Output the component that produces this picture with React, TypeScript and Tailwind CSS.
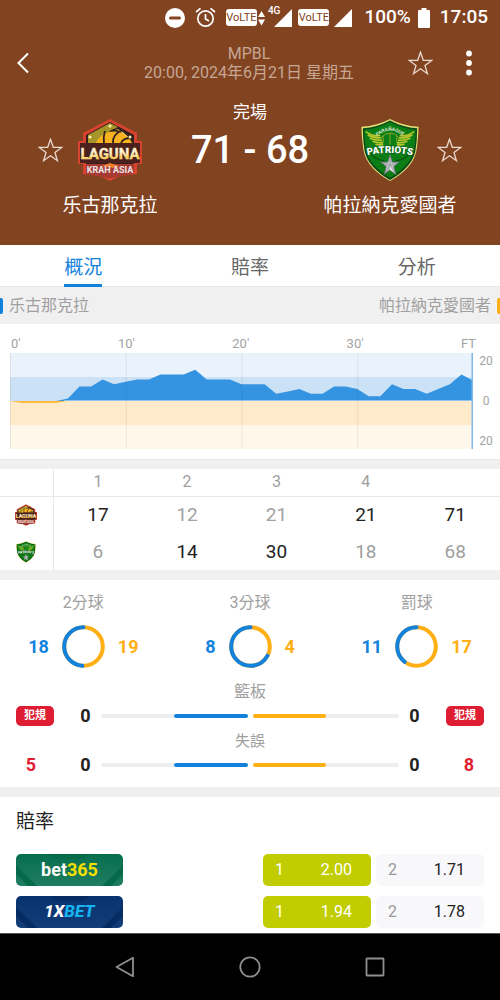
import { useState } from "react";
import clsx from "clsx";

type Side = "home" | "away";

const TEAMS: Record<Side, { name: string; total: number }> = {
  home: { name: "乐古那克拉", total: 71 },
  away: { name: "帕拉納克愛國者", total: 68 },
};

const TABS = ["概況", "賠率", "分析"];

const LEADS = [
  0, -0.8, -0.8, -0.8, -0.8, 1, 6, 6, 9, 7, 8, 9, 9, 11, 11, 11, 13, 9, 9, 9, 7,
  7, 7, 3, 4, 5, 3, 3, 6, 6, 5, 2, 2, 7, 5, 5, 3, 5, 7, 11, 8.5,
];

const QUARTERS: Record<Side, number[]> = {
  home: [17, 12, 21, 21],
  away: [6, 14, 30, 18],
};

const SHOTS = [
  { label: "2分球", home: 18, away: 19 },
  { label: "3分球", home: 8, away: 4 },
  { label: "罰球", home: 11, away: 17 },
];

const ODDS = [
  { book: "bet365", home: "2.00", away: "1.71" },
  { book: "1XBET", home: "1.94", away: "1.78" },
];

function StarIcon() {
  return (
    <svg width="25" height="25" viewBox="0 0 25 25" fill="none" aria-hidden="true">
      <path
        d="M12.5 1.2 15.3 9.3 23.7 9.4 17 14.5 19.4 22.7 12.5 17.8 5.6 22.7 8 14.5 1.3 9.4 9.7 9.3Z"
        stroke="#ead9cf"
        strokeWidth="1.3"
      />
    </svg>
  );
}

function LagunaLogo({ size }: { size: number }) {
  return (
    <svg width={size} height={size} viewBox="0 0 64 64" role="img" aria-label={TEAMS.home.name}>
      <path d="M32 1 59 15V23H64V46H59V56L42 58 32 63 22 58 5 56V46H0V23H5V15Z" fill="#d8432f" />
      <path d="M32 4 56 17V54L32 60 8 54V17Z" fill="#33201c" />
      <path d="M32 5 10 17V26H24Q27 13 40 9Z" fill="#a8952a" />
      <path d="M18 25A19 17 0 0 1 54 25Z" fill="#f6b21f" />
      <path d="M35 10Q46 12 52 22Q42 12 35 10Z" fill="#ffd85a" />
      <path
        d="M27 13Q25 19 26 25M35 25Q34 17 44 12M43 25Q45 20 53 20"
        fill="none"
        stroke="#33201c"
        strokeWidth="1.8"
      />
      <g fill="#fff0b0">
        <circle cx="32" cy="8" r="1.5" />
        <circle cx="12" cy="19" r="1.5" />
        <circle cx="52" cy="19" r="1.5" />
      </g>
      <path d="M2 25H62V45H2Z" fill="#4a211c" />
      <path d="M8 46H56V56L32 60 8 56Z" fill="#a73a32" />
      <path d="M24 48 32 45 41 48 36 50Z" fill="#f08030" />
      <defs>
        <linearGradient id="laguna-gold" x1="0" y1="0" x2="0" y2="1">
          <stop offset="0.4" stopColor="#fff6e0" />
          <stop offset="0.75" stopColor="#ffc02c" />
        </linearGradient>
      </defs>
      <text
        x="32"
        y="41"
        textAnchor="middle"
        fontFamily="Roboto, sans-serif"
        fontWeight="700"
        fontSize="15"
        fill="url(#laguna-gold)"
        stroke="#ffe9b0"
        strokeWidth="0.4"
      >
        LAGUNA
      </text>
      <text
        x="32"
        y="55"
        textAnchor="middle"
        fontFamily="Roboto, sans-serif"
        fontWeight="700"
        fontSize="9"
        fill="#e9e4e6"
      >
        KRAH ASIA
      </text>
    </svg>
  );
}

function PatriotsLogo({ size }: { size: number }) {
  return (
    <svg width={size} height={size} viewBox="0 0 64 66" role="img" aria-label={TEAMS.away.name}>
      <path
        d="M32 1Q45 8 61.5 9Q61 24 59 35Q55 52 32 65Q9 52 5 35Q3 24 2.5 9Q19 8 32 1Z"
        fill="#e3df74"
      />
      <path
        d="M32 2.5Q45 9.5 60 10.5Q60 24 58 35Q54 51 32 64Q10 51 6 35Q4 24 4 10.5Q19 9.5 32 2.5Z"
        fill="#0b4a1a"
      />
      <path
        d="M32 4Q45 11 58.5 12Q58.5 24 56.5 34Q53 49 32 61.5Q11 49 7.5 34Q5.5 24 5.5 12Q19 11 32 4Z"
        fill="#0b7f16"
      />
      <g fill="none" stroke="#b9c52c" strokeWidth="1.7">
        <path d="M7 14Q14 19 22 18M9 17.5Q15 21 23 20.5M11 21Q17 23.5 24 23M14 24Q19 26 25 25.5M17 27Q21 28 25 27.5" />
        <path d="M57 14Q50 19 42 18M55 17.5Q49 21 41 20.5M53 21Q47 23.5 40 23M50 24Q45 26 39 25.5M47 27Q43 28 39 27.5" />
      </g>
      <path
        d="M23 20Q32 11 41 20M25 18V25M32 16V27M39 18V25"
        fill="none"
        stroke="#8fa52c"
        strokeWidth="1"
      />
      <path id="patriots-arc" d="M19 19Q32 7 46 19" fill="none" />
      <text fontFamily="Roboto, sans-serif" fontWeight="700" fontSize="5" fill="#dfe6cf">
        <textPath href="#patriots-arc">PARAÑAQUE</textPath>
      </text>
      <path d="M9 34Q18 44 26 44M55 34Q46 44 38 44" fill="none" stroke="#07590f" strokeWidth="1.5" />
      <path id="patriots-name" d="M7 39Q32 33 57 39" fill="none" />
      <text
        fontFamily="Roboto, sans-serif"
        fontWeight="900"
        fontSize="10"
        fill="#fff"
        stroke="#0b5a16"
        strokeWidth="1"
        paintOrder="stroke"
      >
        <textPath href="#patriots-name" startOffset="50%" textAnchor="middle">
          PATRIOTS
        </textPath>
      </text>
      <path
        d="M32 38 34.5 45.5H41.5L36 50 38 58 32 53.5 26 58 28 50 22.5 45.5H29.5Z"
        fill="#b9bdc0"
        stroke="#56665a"
        strokeWidth="0.8"
      />
      <path
        d="M32 38V49L38 58 32 53.5M32 49 41.5 45.5M32 49 22.5 45.5M32 49 26 58"
        fill="#e4e6e8"
        stroke="#878d90"
        strokeWidth="0.5"
      />
    </svg>
  );
}

function VolteBadge() {
  return (
    <span className="flex h-[17px] w-[31px] items-center justify-center rounded-[3px] bg-white text-[11px] leading-none font-normal text-[#824321]">
      VoLTE
    </span>
  );
}

function SignalIcon() {
  return (
    <svg width="18" height="18" viewBox="0 0 18 18" aria-hidden="true">
      <path d="M0 18 18 0V18Z" fill="#fff" />
    </svg>
  );
}

function StatusBar() {
  return (
    <div className="flex h-[35px] items-center justify-end pr-3 text-[19px] font-medium">
      <svg width="20" height="20" viewBox="0 0 20 20" aria-hidden="true">
        <circle cx="10" cy="10" r="10" fill="#fff" />
        <path d="M5.5 10H14.5" stroke="#824321" strokeWidth="3" strokeLinecap="round" />
      </svg>
      <svg
        className="ml-[10px]"
        width="21"
        height="21"
        viewBox="0 0 21 21"
        fill="none"
        stroke="#fff"
        strokeWidth="1.7"
        aria-hidden="true"
      >
        <circle cx="10.5" cy="11.5" r="7.7" />
        <path d="M1 5 5.5 1.3M20 5 15.5 1.3M10.5 7V12L14 14" />
      </svg>
      <span className="ml-[10px]">
        <VolteBadge />
      </span>
      <svg className="ml-px" width="7" height="16" viewBox="0 0 7 16" fill="#fff" aria-hidden="true">
        <path d="M0 7 3.5 1 7 7ZM0 9.5H7L3.5 15.5Z" />
      </svg>
      <span className="-mr-[6px] ml-[3px] self-start pt-[6px] text-[10px] leading-[10px]">4G</span>
      <SignalIcon />
      <span className="ml-[6px]">
        <VolteBadge />
      </span>
      <span className="ml-[5px]">
        <SignalIcon />
      </span>
      <span className="ml-3">100%</span>
      <svg className="ml-[7px]" width="12" height="20" viewBox="0 0 12 20" fill="#fff" aria-hidden="true">
        <path d="M3.5 0H8.5V2H11Q12 2 12 3V19Q12 20 11 20H1Q0 20 0 19V3Q0 2 1 2H3.5Z" />
      </svg>
      <span className="ml-[10px]">17:05</span>
    </div>
  );
}

function MatchHeader() {
  return (
    <header className="bg-[#824321] pb-[25px] text-white">
      <StatusBar />
      <div className="flex h-14 items-center pr-5 pl-4">
        <div className="flex w-[74px]">
          <button type="button" aria-label="返回">
            <svg width="14" height="22" viewBox="0 0 14 22" fill="none" aria-hidden="true">
              <path d="M12 1.5 2.5 11 12 20.5" stroke="#fff" strokeWidth="2" />
            </svg>
          </button>
        </div>
        <div className="flex-1 text-center text-base leading-[19px] text-[#c6a794]">
          <p>MPBL</p>
          <p>20:00, 2024年6月21日 星期五</p>
        </div>
        <div className="flex w-[72px] items-center justify-between">
          <button type="button" aria-label="收藏比賽">
            <StarIcon />
          </button>
          <button type="button" aria-label="更多" className="px-2">
            <svg width="6" height="26" viewBox="0 0 6 26" fill="#fff" aria-hidden="true">
              <circle cx="3" cy="3.5" r="2.9" />
              <circle cx="3" cy="13" r="2.9" />
              <circle cx="3" cy="22.5" r="2.9" />
            </svg>
          </button>
        </div>
      </div>

      <div className="flex items-start px-[38px] pt-[9px]">
        <div className="flex items-center gap-[15px] pt-[18px]">
          <button type="button" aria-label="收藏主隊">
            <StarIcon />
          </button>
          <LagunaLogo size={64} />
        </div>
        <div className="flex-1 text-center">
          <p className="text-[17px] leading-6">完場</p>
          <p className="text-[38px] leading-[52px] font-medium whitespace-nowrap">
            {TEAMS.home.total} - {TEAMS.away.total}
          </p>
        </div>
        <div className="flex items-center gap-[15px] pt-[18px]">
          <PatriotsLogo size={64} />
          <button type="button" aria-label="收藏客隊">
            <StarIcon />
          </button>
        </div>
      </div>

      <div className="mt-[10px] flex justify-between text-center text-[19px] leading-7">
        <p className="w-[44%]">{TEAMS.home.name}</p>
        <p className="w-[44%]">{TEAMS.away.name}</p>
      </div>
    </header>
  );
}

function Tabs() {
  const [active, setActive] = useState(TABS[0]);

  return (
    <nav className="grid h-[42px] grid-cols-3 border-b border-[#e8e8e8]">
      {TABS.map((tab) => (
        <button
          key={tab}
          type="button"
          onClick={() => setActive(tab)}
          className="flex justify-center text-[19px]"
        >
          <span
            className={clsx(
              "h-[42px] border-b-[3px] leading-[45px]",
              tab === active ? "border-[#1382dc] text-[#1382dc]" : "border-transparent text-[#666]",
            )}
          >
            {tab}
          </span>
        </button>
      ))}
    </nav>
  );
}

const MINUTE = 463 / 40;
const BASE = 48;

function leadArea(side: Side): string {
  const points = LEADS.map((lead, i) => {
    const v = side === "home" ? Math.max(lead, 0) : Math.min(lead, 0);
    return `${i * MINUTE},${BASE - v * 2.4}`;
  });
  return `M0,${BASE} L${points.join(" L")} L463,${BASE} Z`;
}

function LeadChart() {
  return (
    <section className="border-b border-[#e8e8e8] py-[10px] pr-[5px] pl-[10px] text-[#a3a3a3]">
      <div className="mr-[19px] flex justify-between pl-px text-[13px] leading-[19px]">
        <span>0'</span>
        <span>10'</span>
        <span>20'</span>
        <span>30'</span>
        <span>FT</span>
      </div>
      <div className="flex gap-1">
        <svg
          className="h-24 min-w-0 flex-1"
          viewBox="0 0 463 96"
          preserveAspectRatio="none"
          role="img"
          aria-label="領先走勢"
        >
          <rect width="463" height="24" fill="#eaf3fc" />
          <rect y="24" width="463" height="24" fill="#cbe1f5" />
          <rect y="48" width="463" height="24" fill="#ffebcc" />
          <rect y="72" width="463" height="24" fill="#fff7ea" />
          <path d={leadArea("home")} fill="#3594e1" />
          <path d={leadArea("away")} fill="#fcbb3c" />
          <rect x="54" y="47" width="409" height="1" fill="#8cc2ee" />
          {[0, 10, 20, 30].map((m) => (
            <rect key={m} x={m * MINUTE} width="1" height="96" fill="#000" fillOpacity="0.07" />
          ))}
          <rect x="461.5" width="1.5" height="96" fill="#7db9ec" />
        </svg>
        <div className="flex h-24 w-[18px] flex-col items-center justify-between text-xs leading-4">
          <span>20</span>
          <span>0</span>
          <span>20</span>
        </div>
      </div>
    </section>
  );
}

function QuarterTable() {
  const sides: Side[] = ["home", "away"];

  return (
    <section className="border-t-[9px] border-b-[10px] border-[#f0f0f0]">
      <table className="w-full table-fixed text-center">
        <thead>
          <tr className="h-[27px] border-b border-[#e8e8e8] text-base leading-6 text-[#a0a0a0]">
            <th className="w-[53px] border-r border-[#e8e8e8]" aria-label="球隊" />
            {[1, 2, 3, 4].map((q) => (
              <th key={q} className="font-normal">
                {q}
              </th>
            ))}
            <th aria-label="總分" />
          </tr>
        </thead>
        <tbody className="text-[19px] leading-6">
          {sides.map((side) => {
            const other = side === "home" ? "away" : "home";
            const scores = [...QUARTERS[side], TEAMS[side].total];
            const rival = [...QUARTERS[other], TEAMS[other].total];
            return (
              <tr key={side} className="h-[37px]">
                <th className="border-r border-[#e8e8e8]">
                  <span className="flex justify-center">
                    {side === "home" ? <LagunaLogo size={22} /> : <PatriotsLogo size={22} />}
                  </span>
                </th>
                {scores.map((score, i) => (
                  <td key={i} className={score > rival[i] ? "text-[#222]" : "text-[#a0a0a0]"}>
                    {score}
                  </td>
                ))}
              </tr>
            );
          })}
        </tbody>
      </table>
    </section>
  );
}

function ShotRing({ home, away }: { home: number; away: number }) {
  const r = 19.3;
  const circ = 2 * Math.PI * r;
  const share = home / (home + away);
  return (
    <svg width="43" height="43" viewBox="0 0 43 43" fill="none" strokeWidth="4" aria-hidden="true">
      <circle cx="21.5" cy="21.5" r={r} stroke="#ffae13" />
      {/* home share runs counter-clockwise from the top */}
      <circle
        cx="21.5"
        cy="21.5"
        r={r}
        stroke="#1382dc"
        strokeLinecap="round"
        strokeDasharray={`${circ * share} ${circ}`}
        transform="matrix(0 -1 -1 0 43 43)"
      />
    </svg>
  );
}

function FoulBadge() {
  return (
    <span className="block h-5 rounded-[5px] bg-[#df1d32] text-center text-[11px] leading-5 font-bold text-white">
      犯規
    </span>
  );
}

function BarRow({ left, right }: { left: React.ReactNode; right: React.ReactNode }) {
  return (
    <div className="flex h-6 items-center px-4 text-lg font-bold text-[#222]">
      <div className="w-[38px]">{left}</div>
      <span className="w-[47px] pl-4 text-center">0</span>
      <div className="flex flex-1 gap-[5px]">
        <div className="flex h-1 flex-1 justify-end rounded-full bg-[#eee]">
          <div className="w-1/2 rounded-full bg-[#1382dc]" />
        </div>
        <div className="flex h-1 flex-1 rounded-full bg-[#eee]">
          <div className="w-1/2 rounded-full bg-[#ffae13]" />
        </div>
      </div>
      <span className="w-[47px] pr-4 text-center">0</span>
      <div className="w-[38px]">{right}</div>
    </div>
  );
}

function Stats() {
  return (
    <section className="pt-[11px] pb-[10px]">
      <div className="grid grid-cols-3">
        {SHOTS.map((shot) => (
          <div key={shot.label}>
            <p className="text-center text-base leading-6 text-[#a0a0a0]">{shot.label}</p>
            <div className="mt-[10px] flex items-center gap-[13px] text-lg font-bold">
              <span className="flex-1 text-right text-[#1382dc]">{shot.home}</span>
              <ShotRing home={shot.home} away={shot.away} />
              <span className="flex-1 text-[#ffae13]">{shot.away}</span>
            </div>
          </div>
        ))}
      </div>
      <p className="mt-3 text-center text-base leading-6 text-[#a0a0a0]">籃板</p>
      <BarRow left={<FoulBadge />} right={<FoulBadge />} />
      <p className="mt-px text-center text-[15px] leading-6 text-[#a0a0a0]">失誤</p>
      <BarRow
        left={<p className="pr-2 text-center text-[#df1d32]">5</p>}
        right={<p className="pl-2 text-center text-[#df1d32]">8</p>}
      />
    </section>
  );
}

function BookLogo({ book }: { book: string }) {
  const isBet365 = book === "bet365";
  return (
    <a
      href="#"
      className={clsx(
        "relative flex h-8 w-[107px] items-center justify-center overflow-hidden rounded-[5px] bg-linear-to-b",
        isBet365 ? "from-[#056e4e] to-[#1f7d60]" : "from-[#07326e] to-[#123d78]",
      )}
    >
      <svg
        className="absolute inset-0 h-full w-full"
        viewBox="0 0 107 32"
        fill={isBet365 ? "#056a4a" : "#062c64"}
        aria-hidden="true"
      >
        <path d="M0 11 21 32H12L0 20ZM107 11 86 32H95L107 20Z" />
        <path d="M32 0H75L66 5H41Z" />
      </svg>
      {isBet365 ? (
        <span className="relative text-lg font-bold text-white">
          bet<span className="text-[#f7e000]">365</span>
        </span>
      ) : (
        <span className="relative text-[17px] font-extrabold text-white italic">
          1X<span className="text-[#17b4f2]">BET</span>
        </span>
      )}
    </a>
  );
}

function OddsButton({ pick, value, best }: { pick: number; value: string; best?: boolean }) {
  return (
    <button
      type="button"
      className={clsx(
        "flex h-8 w-[108px] items-center justify-between rounded-[5px] pr-[19px] pl-3",
        best ? "bg-[#c1cd00] text-white" : "bg-[#f8f8fb] text-[#222]",
      )}
    >
      <span className={best ? "text-white" : "text-[#999]"}>{pick}</span>
      <span>{value}</span>
    </button>
  );
}

function Odds() {
  return (
    <section className="border-t-[10px] border-[#f0f0f0] px-4 pt-[11px] pb-[5px]">
      <h2 className="text-[19px] leading-7 text-[#222]">賠率</h2>
      <div className="mt-[18px] flex flex-col gap-[10px] text-base">
        {ODDS.map((row) => (
          <div key={row.book} className="flex items-center gap-[5px]">
            <BookLogo book={row.book} />
            <div className="flex-1" />
            <OddsButton pick={1} value={row.home} best />
            <OddsButton pick={2} value={row.away} />
          </div>
        ))}
      </div>
    </section>
  );
}

function SystemNav() {
  return (
    <footer className="grid h-[67px] grid-cols-3 place-items-center border-t border-[#555] bg-black px-[12.5%]">
      <button type="button" aria-label="上一頁">
        <svg width="22" height="22" viewBox="0 0 22 22" fill="none" aria-hidden="true">
          <path d="M2.5 11 19 1.8V20.2Z" stroke="#8f8f8f" strokeWidth="1.8" strokeLinejoin="round" />
        </svg>
      </button>
      <button type="button" aria-label="主畫面">
        <svg width="22" height="22" viewBox="0 0 22 22" fill="none" aria-hidden="true">
          <circle cx="11" cy="11" r="9.7" stroke="#8f8f8f" strokeWidth="1.8" />
        </svg>
      </button>
      <button type="button" aria-label="最近使用">
        <svg width="22" height="22" viewBox="0 0 22 22" fill="none" aria-hidden="true">
          <rect x="2.5" y="2.5" width="17" height="17" rx="0.5" stroke="#8f8f8f" strokeWidth="1.8" />
        </svg>
      </button>
    </footer>
  );
}

export default function App() {
  return (
    <div lang="zh-Hant" className="bg-white font-[Roboto,'Noto_Sans_CJK_TC',sans-serif]">
      <MatchHeader />
      <Tabs />
      <div className="flex h-[37px] items-center justify-between bg-[#f0f0f0] text-base text-[#a0a0a0]">
        <p className="flex items-center gap-[6px]">
          <span className="h-4 w-[3px] rounded-r-[2px] bg-[#1382dc]" />
          {TEAMS.home.name}
        </p>
        <p className="flex items-center gap-[6px]">
          {TEAMS.away.name}
          <span className="h-4 w-[3px] rounded-l-[2px] bg-[#ffae13]" />
        </p>
      </div>
      <LeadChart />
      <QuarterTable />
      <Stats />
      <Odds />
      <SystemNav />
    </div>
  );
}
